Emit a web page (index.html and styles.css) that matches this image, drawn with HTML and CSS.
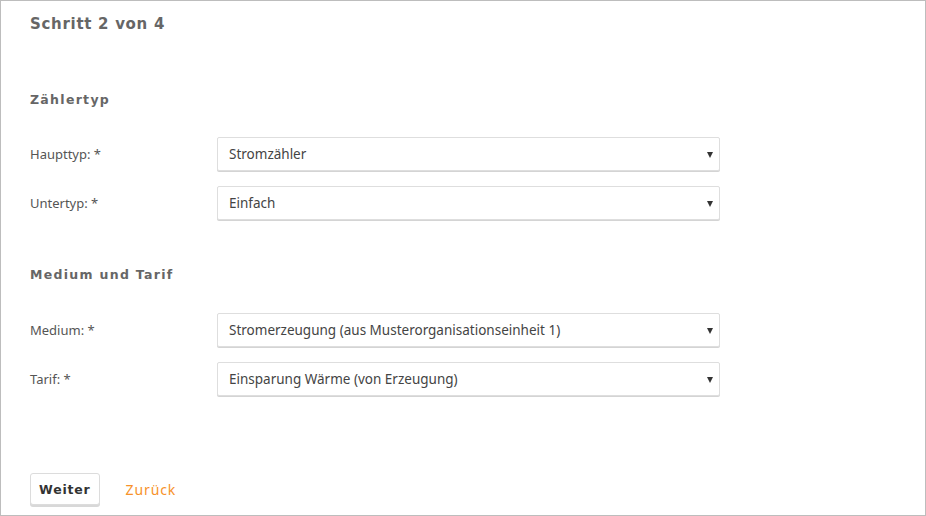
FILE: index.html
```html
<!DOCTYPE html>
<html lang="de">
<head>
<meta charset="utf-8">
<title>Schritt 2 von 4</title>
<link rel="stylesheet" href="styles.css">
</head>
<body>
<div class="frame">
  <h1 class="step-title">Schritt 2 von 4</h1>

  <h2 class="section-title first">Zählertyp</h2>
  <div class="form-row">
    <label class="form-label" for="haupttyp">Haupttyp: *</label>
    <div class="select-wrap">
      <select id="haupttyp" class="form-select"><option>Stromzähler</option></select>
    </div>
  </div>
  <div class="form-row">
    <label class="form-label" for="untertyp">Untertyp: *</label>
    <div class="select-wrap">
      <select id="untertyp" class="form-select"><option>Einfach</option></select>
    </div>
  </div>

  <h2 class="section-title second">Medium und Tarif</h2>
  <div class="form-row">
    <label class="form-label" for="medium">Medium: *</label>
    <div class="select-wrap">
      <select id="medium" class="form-select"><option>Stromerzeugung (aus Musterorganisationseinheit 1)</option></select>
    </div>
  </div>
  <div class="form-row">
    <label class="form-label" for="tarif">Tarif: *</label>
    <div class="select-wrap">
      <select id="tarif" class="form-select"><option>Einsparung Wärme (von Erzeugung)</option></select>
    </div>
  </div>

  <div class="actions">
    <button class="btn" type="button">Weiter</button>
    <a class="back-link" href="#">Zurück</a>
  </div>
</div>
</body>
</html>
```

FILE: styles.css
```css
* { box-sizing: border-box; }

html, body {
  margin: 0;
  padding: 0;
  background: #fff;
}

body {
  font-family: "Noto Sans", "Open Sans", sans-serif;
  color: #555;
}

.frame {
  width: 926px;
  height: 516px;
  border: 1px solid #bdbdbd;
  padding: 11px 0 0 29px;
  overflow: hidden;
}

.step-title {
  margin: 0;
  font-family: "DejaVu Sans", "Noto Sans", sans-serif;
  font-size: 15px;
  font-weight: bold;
  line-height: 24px;
  letter-spacing: 0.7px;
  color: #666;
}

.section-title {
  margin: 0;
  font-family: "DejaVu Sans", "Noto Sans", sans-serif;
  font-size: 12.5px;
  font-weight: bold;
  line-height: 20px;
  letter-spacing: 1.3px;
  color: #666;
}

.section-title.first { margin-top: 54px; margin-bottom: 27px; }
.section-title.second { margin-top: 45px; margin-bottom: 28px; }

.form-row {
  display: flex;
  align-items: center;
  height: 34px;
  margin-bottom: 15px;
}

.form-label {
  width: 187px;
  flex: none;
  font-size: 13px;
  color: #555;
}

.select-wrap {
  position: relative;
  width: 503px;
  height: 34px;
}

.select-wrap::after {
  content: "";
  position: absolute;
  right: 7px;
  top: 15px;
  border-left: 3.5px solid transparent;
  border-right: 3.5px solid transparent;
  border-top: 6px solid #333;
  pointer-events: none;
}

.form-select {
  appearance: none;
  -webkit-appearance: none;
  width: 100%;
  height: 34px;
  margin: 0;
  padding: 0 24px 0 11px;
  font-family: "Noto Sans", "Open Sans", sans-serif;
  font-size: 13.5px;
  color: #444;
  background: #fff;
  border: 1px solid #dedede;
  border-radius: 2px;
  box-shadow: 0 1px 0 #d4d4d4;
  outline: none;
}

.actions {
  display: flex;
  align-items: center;
  gap: 26px;
  margin-top: 77px;
}

.btn {
  height: 32px;
  padding: 0 8px;
  font-family: "DejaVu Sans", "Noto Sans", sans-serif;
  font-size: 12.5px;
  font-weight: bold;
  letter-spacing: 0.8px;
  color: #333;
  background: #fff;
  border: 1px solid #dcdcdc;
  border-radius: 3px;
  box-shadow: 0 2px 0 #d8d8d8;
  cursor: pointer;
}

.back-link {
  font-size: 14px;
  letter-spacing: 0.9px;
  color: #f7922a;
  text-decoration: none;
}
```
